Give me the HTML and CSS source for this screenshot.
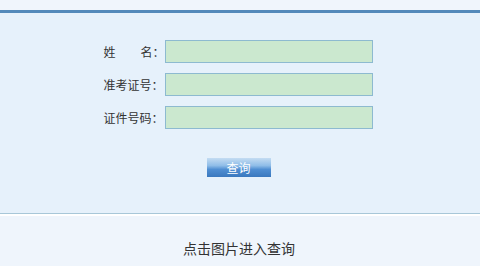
FILE: index.html
```html
<!DOCTYPE html>
<html>
<head>
<meta charset="utf-8">
<link rel="stylesheet" href="styles.css">
</head>
<body>
<div class="top"></div>
<div class="panel">
  <div class="form">
    <div class="row"><span class="label"><span class="c">姓</span><span class="c gap">名</span>：</span><span class="input"></span></div>
    <div class="row"><span class="label">准考证号：</span><span class="input"></span></div>
    <div class="row"><span class="label">证件号码：</span><span class="input"></span></div>
  </div>
  <div class="btnrow"><span class="btn">查询</span></div>
</div>
<div class="bottom">点击图片进入查询</div>
</body>
</html>
```
FILE: styles.css
```css
html, body { margin: 0; padding: 0; }
body {
  width: 480px;
  height: 266px;
  overflow: hidden;
  background: #eff5fc;
  font-family: "Noto Sans CJK SC", "DejaVu Sans", sans-serif;
  color: #333;
}
.top {
  height: 10px;
  background: #f0f5fc;
  border-bottom: 3px solid #5389ba;
}
.panel {
  height: 201px;
  box-sizing: border-box;
  background: #e6f1fb;
  border-bottom: 1px solid #a8c7d8;
  padding-top: 27px;
}
.form {
  display: flex;
  flex-direction: column;
  gap: 10px;
  align-items: center;
}
.row {
  display: flex;
  align-items: center;
  height: 23px;
  margin-left: -4px;
}
.label {
  width: 61px;
  font-size: 12px;
  line-height: 23px;
  display: flex;
  white-space: nowrap;
}
.c { display: inline-block; }
.gap { margin-left: 25px; }
.input {
  width: 206px;
  height: 21px;
  background: #cbe8cf;
  border: 1px solid #8dbad0;
}
.btnrow {
  display: flex;
  justify-content: center;
  margin-top: 29px;
}
.btn {
  width: 64px;
  height: 19px;
  margin-left: -3px;
  line-height: 19px;
  text-align: center;
  font-size: 12px;
  color: #fff;
  background: linear-gradient(to bottom, #c4dcf2 0%, #8fbde8 40%, #4f8ed2 60%, #3a78be 100%);
}
.bottom {
  border-top: 2px solid #ffffff;
  text-align: center;
  font-size: 14px;
  color: #333;
  padding-top: 23px;
  line-height: 18px;
  margin-left: -2px;
}
```
